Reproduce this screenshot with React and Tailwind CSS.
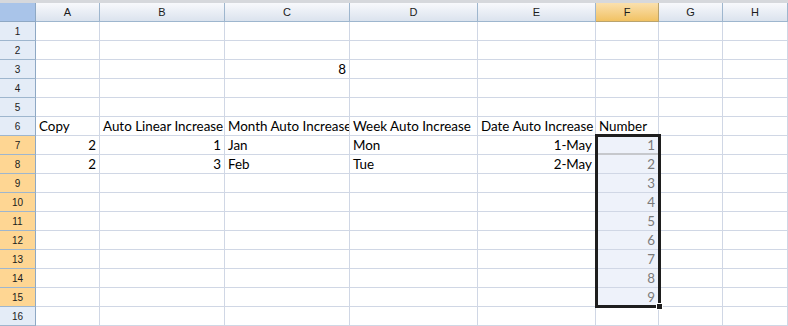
import React from "react";

const cols = ["A", "B", "C", "D", "E", "F", "G", "H"];

const data = {
  3: { C: { v: "8", r: true } },
  6: {
    A: { v: "Copy" },
    B: { v: "Auto Linear Increase" },
    C: { v: "Month Auto Increase" },
    D: { v: "Week Auto Increase" },
    E: { v: "Date Auto Increase" },
    F: { v: "Number" },
  },
  7: {
    A: { v: "2", r: true },
    B: { v: "1", r: true },
    C: { v: "Jan" },
    D: { v: "Mon" },
    E: { v: "1-May", r: true },
  },
  8: {
    A: { v: "2", r: true },
    B: { v: "3", r: true },
    C: { v: "Feb" },
    D: { v: "Tue" },
    E: { v: "2-May", r: true },
  },
};

const font = { fontFamily: "Lato, 'Open Sans', sans-serif" };

export default function App() {
  const rows = Array.from({ length: 16 }, (_, i) => i + 1);
  return (
    <div className="w-[788px] h-[326px] overflow-hidden bg-white">
      <div className="h-[3px] bg-[#d6d8dc]" />
      <div className="relative grid grid-cols-[36px_64px_125px_125px_128px_118px_63px_64px_65px]">
        <div className="h-[19px] bg-[#a9c4e9] border-r border-b border-[#8ea8c4]" />
        {cols.map((c) => (
          <div
            key={c}
            className={`h-[19px] border-r border-b flex items-center justify-center text-[11px] text-[#1b1b1b] ${
              c === "F"
                ? "bg-gradient-to-b from-[#fae0ad] to-[#f1c262] border-[#b9a36e]"
                : "bg-gradient-to-b from-[#f8f9fc] to-[#dbe3ee] border-[#9eb6ce]"
            }`}
            style={{ fontFamily: "'Liberation Sans', Arial, sans-serif" }}
          >
            {c}
          </div>
        ))}
        {rows.map((r) => {
          const sel = r >= 7 && r <= 15;
          return (
            <React.Fragment key={r}>
              <div
                className={`h-[19px] border-r border-b flex items-center justify-center text-[10px] text-[#1b1b1b] ${
                  sel
                    ? "bg-[#fed693] border-r-[#8ea8c4] border-b-[#9eb6ce]"
                    : "bg-[#e4ecf7] border-r-[#8ea8c4] border-b-[#9eb6ce]"
                }`}
                style={{ fontFamily: "'Liberation Sans', Arial, sans-serif" }}
              >
                {r}
              </div>
              {cols.map((c) => {
                const inSel = c === "F" && sel;
                const cell = inSel ? { v: String(r - 6), r: true } : data[r]?.[c];
                return (
                  <div
                    key={c}
                    className={`h-[19px] border-r border-b px-[3px] overflow-hidden whitespace-nowrap text-[13.4px] leading-[18px] ${
                      inSel ? "bg-[#eef2fa] text-[#7b7b7b]" : "text-black"
                    } ${cell?.r ? "text-right" : "text-left"} ${
                      inSel && r === 7 ? "border-b-2 border-b-[#c6c8cc] border-r-[#d0d7e5]" : "border-[#d0d7e5]"
                    }`}
                    style={font}
                  >
                    {cell?.v}
                  </div>
                );
              })}
            </React.Fragment>
          );
        })}
        <div className="absolute left-[595px] top-[131px] w-[66px] h-[174px] border-[3px] border-[#1e1e1e] pointer-events-none" />
        <div className="absolute left-[656px] top-[300px] w-[7px] h-[7px] bg-[#1e1e1e] border border-white" />
      </div>
    </div>
  );
}
